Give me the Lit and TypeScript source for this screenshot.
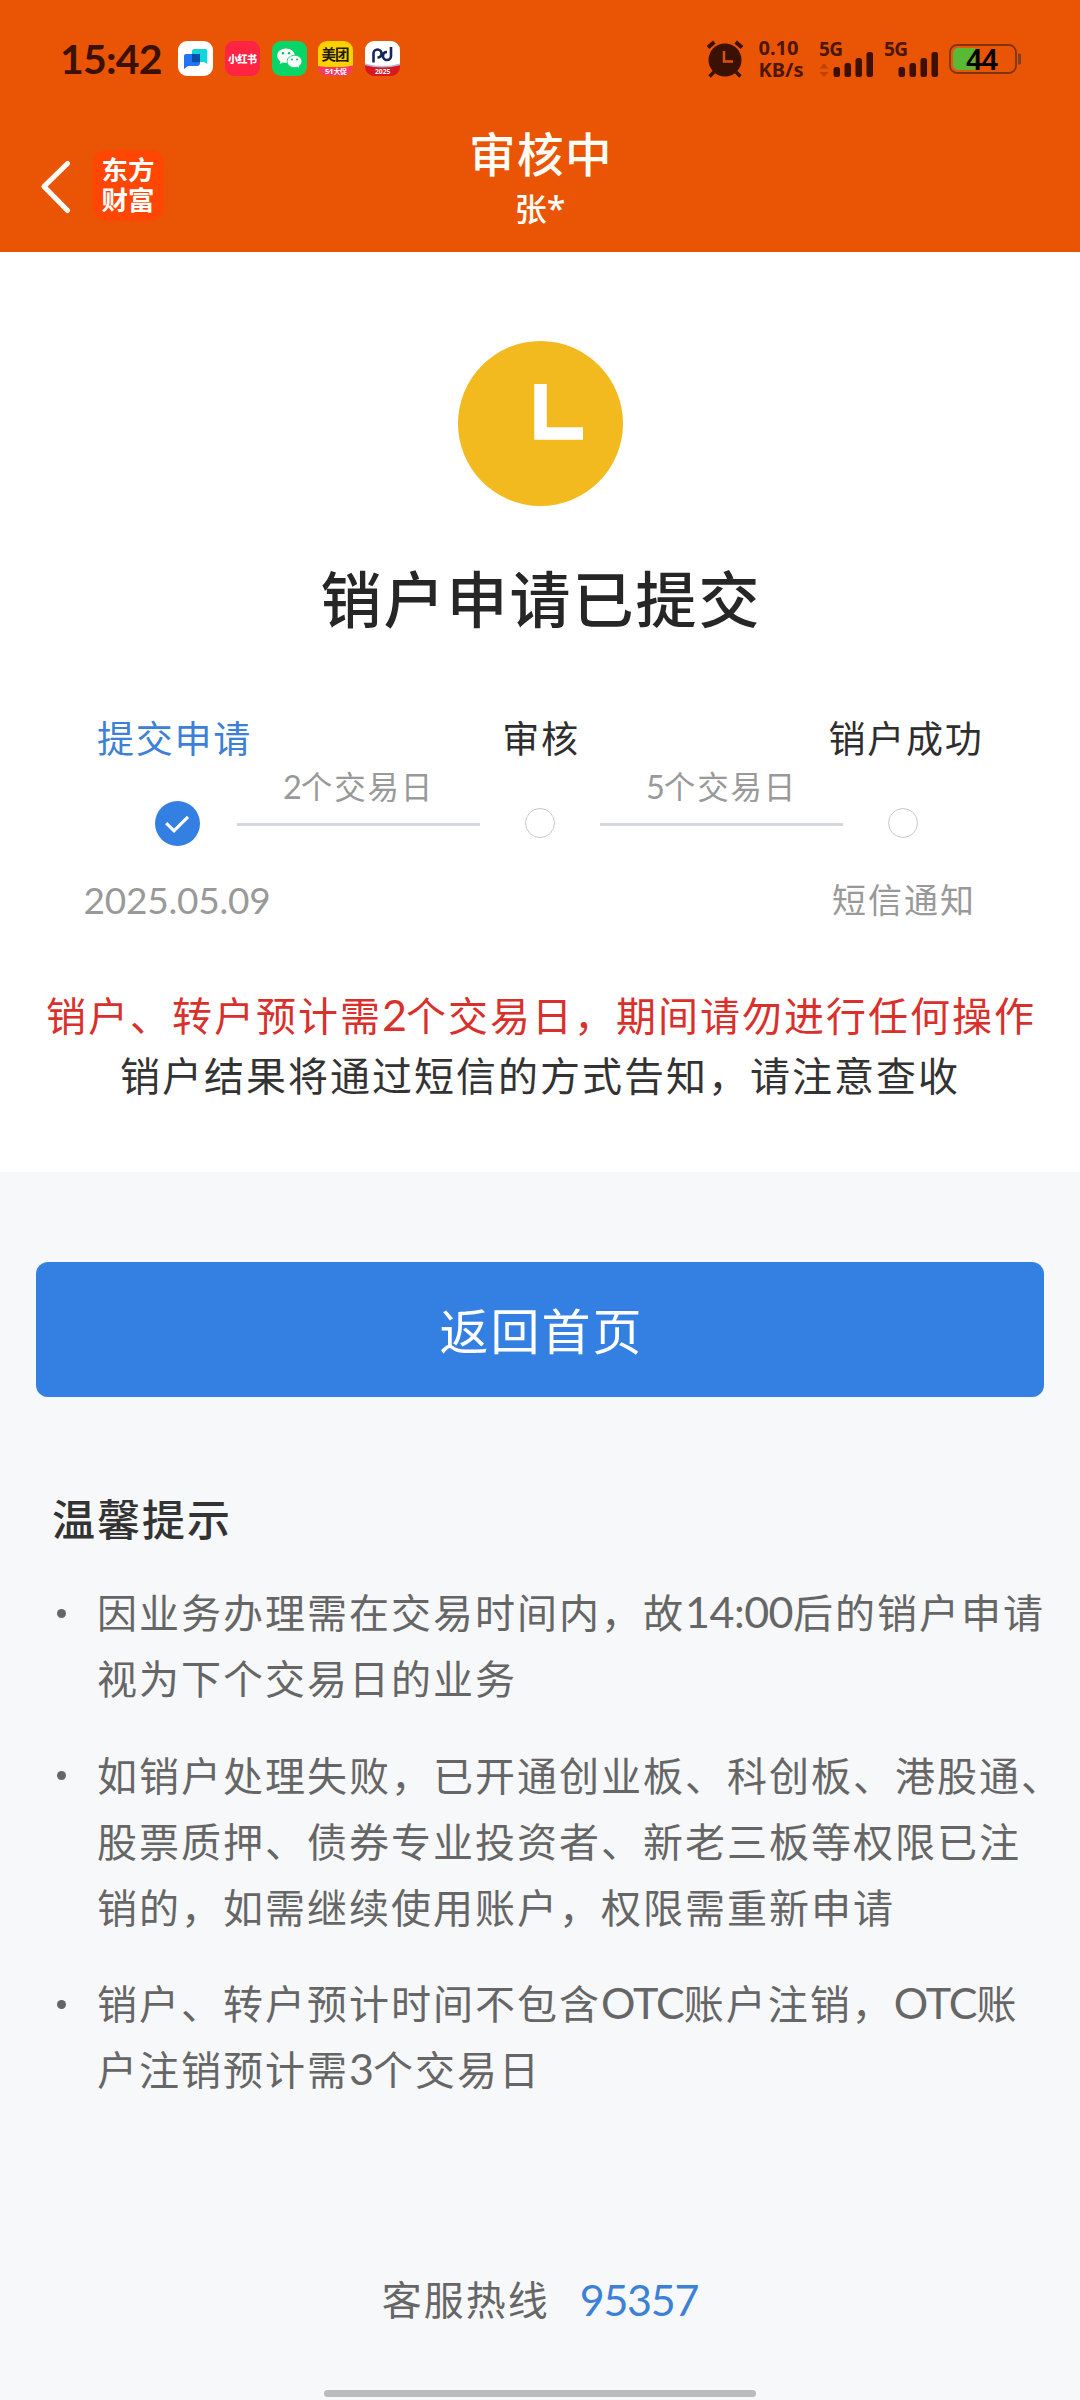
import { LitElement, html, css, svg } from "lit";
import { customElement, property } from "lit/decorators.js";

const fontStack = css`Lato, "Noto Sans CJK SC", sans-serif`;

@customElement("status-bar")
class StatusBar extends LitElement {
  static styles = css`
    :host { display: block; font-family: ${fontStack}; color: #3a1103; }
    svg { overflow: visible; }
    .bar { display: flex; align-items: center; height: 117px; padding: 0 58.500px 0 60px; box-sizing: border-box; }
    .time { width: 118px; font-size: 41px; line-height: 58px; font-weight: 700; letter-spacing: -0.800px; white-space: nowrap; }
    .apps { display: flex; gap: 11.800px; }
    .apps svg { width: 35px; height: 35px; display: block; }
    .spacer { flex: 1; }
    .alarm { width: 38px; height: 38px; display: block; margin-right: 15px; }
    .speed { width: 60px; font: 700 20px/22px "Noto Sans", sans-serif; white-space: nowrap; color: #4c1602; }
    .signal { width: 65px; height: 38px; display: block; }
    .battery { width: 73px; height: 32px; display: block; }
    .sig-text { font: 700 19px "Noto Sans", sans-serif; }
    .bat-text { font: 600 29px "Noto Sans", sans-serif; }
    .app-text { font-family: "Noto Sans CJK SC", sans-serif; font-weight: 900; }
    .app-text.mid { font-weight: 700; }
    .app-num { font-family: "Noto Sans", sans-serif; font-weight: 700; }
  `;

  private signal(active: boolean) {
    return html`<svg class="signal" viewBox="0 0 65 38">
      <text class="sig-text" x="0" y="15.500" fill="#4c1602" textLength="24">5G</text>
      ${active ? svg`<path d="M5 23.500l4.500 5h-9zM5 37l4.500-5h-9z" fill="#bd4300"/>` : null}
      <g fill="#3a1103">
        <rect x="14.500" y="27" width="6.500" height="10" rx="2.500"/>
        <rect x="25.500" y="23" width="6.500" height="14" rx="2.500"/>
        <rect x="36.500" y="18" width="6.500" height="19" rx="2.500"/>
        <rect x="47.500" y="12" width="6.500" height="25" rx="2.500"/>
      </g>
    </svg>`;
  }

  render() {
    return html`<div class="bar">
      <div class="time">15:42</div>
      <div class="apps">
        <svg viewBox="0 0 35 35"><rect width="35" height="35" rx="9" fill="#fff"/>
          <path d="M8 13h14v9a3 3 0 0 1-3 3H10l-4 3V15a2 2 0 0 1 2-2z" fill="#2274f2"/>
          <path d="M16 8h11.500a1.800 1.800 0 0 1 1.800 1.800V23l-3.300-1.900H14V10a2 2 0 0 1 2-2z" fill="#12d5da"/>
          <path d="M14 13h8v8.100h-8z" fill="#064fa8"/></svg>
        <svg viewBox="0 0 35 35"><rect width="35" height="35" rx="9" fill="#fe2442"/>
          <text class="app-text" x="3" y="22" font-size="10" fill="#fff" textLength="29">小红书</text></svg>
        <svg viewBox="0 0 35 35"><rect width="35" height="35" rx="9" fill="#07d565"/>
          <path d="M14 7.500c-5 0-8.800 3.100-8.800 7.200 0 2.400 1.300 4.400 3.300 5.700l-.8 2.700 3.100-1.600c1 .3 2.100.4 3.200.4 5 0 8.800-3.200 8.800-7.200s-3.900-7.200-8.800-7.200z" fill="#fff"/>
          <path d="M22.500 14.300c-4.200 0-7.400 2.700-7.400 6.100s3.200 6.200 7.400 6.200c.9 0 1.800-.1 2.600-.4l2.600 1.400-.6-2.400c1.700-1.100 2.800-2.800 2.800-4.800 0-3.400-3.200-6.100-7.400-6.100z" fill="#fff" stroke="#07d565" stroke-width=".9"/>
          <g fill="#07c15b"><circle cx="11" cy="12.300" r="1.200"/><circle cx="17" cy="12.300" r="1.200"/><circle cx="20" cy="18.600" r="1"/><circle cx="25" cy="18.600" r="1"/></g></svg>
        <svg viewBox="0 0 35 35"><path d="M9 0h17a9 9 0 0 1 9 9v17H0V9a9 9 0 0 1 9-9z" fill="#ffd100"/>
          <path d="M0 25q17.500 3 35-.5V26a9 9 0 0 1-9 9H9a9 9 0 0 1-9-9z" fill="#fb3a63"/>
          <text class="app-text mid" x="3.500" y="19" font-size="14.500" fill="#1d1a06" textLength="28">美团</text>
          <text class="app-num" x="7" y="33.300" font-size="7.500" fill="#fff" textLength="8.500">5·1</text>
          <text class="app-text mid" x="15.500" y="33" font-size="7" fill="#fff" textLength="13.500">大促</text></svg>
        <svg viewBox="0 0 35 35"><path d="M9 0h17a9 9 0 0 1 9 9v17H0V9a9 9 0 0 1 9-9z" fill="#fff"/>
          <path d="M0 23.500q17.500 4.500 35 0V26a9 9 0 0 1-9 9H9a9 9 0 0 1-9-9z" fill="#d8181f"/>
          <path d="M0 22.500q17.500 5 35 0v1.800q-17.500 4.500-35 0z" fill="#b9b4d8"/>
          <path d="M8.500 21.500V12.500a4 4 0 0 1 8 0c0 2.500-1.500 4-4 4M26 6v9a4 4 0 0 1-8 0c0-2.500 1.500-4 4-4" fill="none" stroke="#14265c" stroke-width="2.600"/>
          <text class="app-num" x="10" y="33.300" font-size="6.800" fill="#fff" textLength="15.500">2025</text></svg>
      </div>
      <div class="spacer"></div>
      <svg class="alarm" viewBox="0 0 38 38">
        <path d="M2 7.500L8.300 2M29.700 2L36 7.500" stroke="#3a1103" stroke-width="4" fill="none"/>
        <path d="M8 32l-4.500 4.500M30 32l4.500 4.500" stroke="#3a1103" stroke-width="3.500" fill="none"/>
        <circle cx="19" cy="20" r="16.500" fill="#3a1103"/>
        <path d="M18 11v10.500h9" stroke="#d85407" stroke-width="2.500" fill="none"/></svg>
      <div class="speed"><div>0.10</div><div>KB/s</div></div>
      ${this.signal(true)}${this.signal(false)}
      <svg class="battery" viewBox="0 0 73 32">
        <rect x="1" y="2" width="66" height="28" rx="7" fill="none" stroke="#7d3513" stroke-width="1.800"/>
        <path d="M9 5h17.500v22H9a5 5 0 0 1-5-5V10a5 5 0 0 1 5-5z" fill="#57b935"/>
        <path d="M69 10.500h1.500a1.500 1.500 0 0 1 1.500 1.500v8a1.500 1.500 0 0 1-1.500 1.500H69z" fill="#7d4120"/>
        <text class="bat-text" x="17" y="26.500" fill="#000" textLength="32">44</text></svg>
    </div>`;
  }
}

@customElement("nav-header")
class NavHeader extends LitElement {
  static styles = css`
    :host { display: block; font-family: ${fontStack}; color: #fffdf8; }
    .row { display: grid; grid-template-columns: 200px 1fr 200px; height: 135px; }
    .left { display: flex; align-items: flex-start; padding: 33px 0 0 40px; }
    .back { width: 32px; height: 71px; margin-right: 20.500px; }
    .logo { width: 71px; height: 71px; border-radius: 14px; background: #ff4603; display: flex; flex-direction: column; justify-content: center; align-items: center; }
    .logo div { font: 700 26.500px/29.500px ${fontStack}; color: #fff; white-space: nowrap; }
    .titles { text-align: center; padding-top: 6px; }
    .title { font-size: 46.500px; line-height: 62px; font-weight: 500; letter-spacing: 1.500px; padding-left: 2px; }
    .name { font-size: 32px; line-height: 48px; font-weight: 500; }
    .star { font: 500 34px/1 "Noto Sans", sans-serif; }
  `;
  render() {
    return html`<div class="row">
      <div class="left">
        <svg class="back" viewBox="0 0 32 71"><path d="M27.500 13.500L4 36.500l23.500 24" fill="none" stroke="#fffdf8" stroke-width="5.200" stroke-linecap="round" stroke-linejoin="round"/></svg>
        <div class="logo"><div>东方</div><div>财富</div></div>
      </div>
      <div class="titles"><div class="title">审核中</div><div class="name">张<span class="star">*</span></div></div>
    </div>`;
  }
}

@customElement("progress-step")
class ProgressStep extends LitElement {
  @property() label = "";
  @property() note = "";
  @property({ type: Boolean }) done = false;
  static styles = css`
    :host { display: flex; flex-direction: column; align-items: center; width: 120px; font-family: ${fontStack}; }
    .label { font-size: 37px; line-height: 56px; letter-spacing: 1.800px; color: #2e2e2e; white-space: nowrap; padding-left: 2px; }
    .label.done { color: #3c80d8; margin-right: 5px; padding-left: 0; }
    .label.end { padding-left: 6px; }
    .mark { height: 46px; margin-top: 33px; display: flex; align-items: center; }
    .ring { width: 30px; height: 30px; box-sizing: border-box; border: 1.500px solid #c9c9c9; border-radius: 50%; }
    .check { width: 45px; height: 45px; display: block; }
    .note { font-size: 34px; line-height: 50px; letter-spacing: 2px; margin-top: 29px; color: #999; white-space: nowrap; padding-left: 2px; }
    .note.date { font-size: 37px; letter-spacing: -0.200px; padding-left: 0; }
  `;
  render() {
    return html`<div class="label ${this.done ? "done" : this.note ? "end" : ""}">${this.label}</div>
      <div class="mark">${this.done
        ? html`<svg class="check" viewBox="0 0 45 45"><circle cx="22.500" cy="22.500" r="22.500" fill="#337fe2"/><path d="M11.200 22.200l7.800 7.600 14-14" fill="none" stroke="#fff" stroke-width="3.200"/></svg>`
        : html`<div class="ring"></div>`}</div>
      <div class="note ${this.done ? "date" : ""}">${this.note}</div>`;
  }
}

@customElement("app-root")
class AppRoot extends LitElement {
  static styles = css`
    :host { display: block; font-family: ${fontStack}; }
    .page { display: flex; flex-direction: column; width: 1080px; height: 2400px; background: #f7f8fa; overflow: hidden; }
    .top { background: #e95504; height: 252px; }
    .panel { background: #fff; height: 920px; display: flex; flex-direction: column; align-items: center; }
    .clock { width: 165px; height: 165px; margin-top: 89px; display: block; }
    .headline { margin-top: 54px; font-size: 61px; line-height: 80px; font-weight: 500; letter-spacing: 2px; color: #262626; padding-left: 2px; }
    .steps { display: flex; align-items: flex-start; margin-top: 71px; height: 241px; }
    .link { width: 243px; display: flex; flex-direction: column; align-items: center; margin-top: 50.500px; }
    .days { font-size: 31.500px; line-height: 50px; letter-spacing: 1.800px; color: #999; height: 61px; }
    .n { font-size: 32.500px; letter-spacing: -1px; line-height: 1; }
    .line { width: 243px; height: 3px; background: #d5d9dd; }
    .notice { margin-top: 33.500px; text-align: center; font-size: 40px; line-height: 60px; letter-spacing: 2px; white-space: nowrap; color: #333; }
    .warn { color: #d9302c; padding-left: 2px; }
    .lat { font-size: 43px; letter-spacing: -1px; line-height: 1; }
    .lat.time { letter-spacing: -0.500px; }
    .button { margin: 90px 36px 0; height: 135px; border-radius: 12px; background: #337fe2; color: #fff; font-size: 49px; line-height: 139px; letter-spacing: 2px; padding-left: 3px; text-align: center; }
    .tips { padding: 92px 0 0 52px; }
    .tips-title { font-size: 43px; line-height: 62px; font-weight: 500; letter-spacing: 2px; color: #333; }
    .tip { display: flex; margin-bottom: 30.500px; color: #666; font-size: 40px; line-height: 66px; letter-spacing: 2px; white-space: nowrap; }
    .tips-title + .tip { margin-top: 29px; }
    .dot { width: 9px; height: 9px; border-radius: 50%; background: #666; margin: 28.500px 31px 0 5px; }
    .hotline { display: flex; justify-content: center; align-items: center; height: 60px; margin-top: 134.500px; color: #666; font-size: 40px; letter-spacing: 2px; }
    .phone { color: #3c80d8; margin-left: 30px; letter-spacing: -1.200px; font-size: 43px; padding-top: 2px; }
    .home { width: 432px; height: 7px; border-radius: 4px; background: #babbbd; margin: auto auto 3px; }
  `;

  render() {
    const n = (t: string) => html`<span class="lat">${t}</span>`;
    const tips = [
      html`因业务办理需在交易时间内，故<span class="lat time">14:00</span>后的销户申请<br>视为下个交易日的业务`,
      html`如销户处理失败，已开通创业板、科创板、港股通、<br>股票质押、债券专业投资者、新老三板等权限已注<br>销的，如需继续使用账户，权限需重新申请`,
      html`销户、转户预计时间不包含${n("OTC")}账户注销，${n("OTC")}账<br>户注销预计需${n("3")}个交易日`,
    ];
    return html`<div class="page" lang="zh-CN">
      <div class="top"><status-bar></status-bar><nav-header></nav-header></div>
      <div class="panel">
        <svg class="clock" viewBox="0 0 165 165"><circle cx="82.500" cy="82.500" r="82.500" fill="#f2ba1f"/><path d="M82.500 43v49.500H125" fill="none" stroke="#fff" stroke-width="12.500"/></svg>
        <div class="headline">销户申请已提交</div>
        <div class="steps">
          <progress-step done label="提交申请" note="2025.05.09"></progress-step>
          <div class="link"><div class="days"><span class="n">2</span>个交易日</div><div class="line"></div></div>
          <progress-step label="审核"></progress-step>
          <div class="link"><div class="days"><span class="n">5</span>个交易日</div><div class="line"></div></div>
          <progress-step label="销户成功" note="短信通知"></progress-step>
        </div>
        <div class="notice"><div class="warn">销户、转户预计需${n("2")}个交易日，期间请勿进行任何操作</div><div>销户结果将通过短信的方式告知，请注意查收</div></div>
      </div>
      <div class="button">返回首页</div>
      <div class="tips"><div class="tips-title">温馨提示</div>
        ${tips.map((t) => html`<div class="tip"><div class="dot"></div><div>${t}</div></div>`)}
      </div>
      <div class="hotline"><span>客服热线</span><span class="phone">95357</span></div>
      <div class="home"></div>
    </div>`;
  }
}
